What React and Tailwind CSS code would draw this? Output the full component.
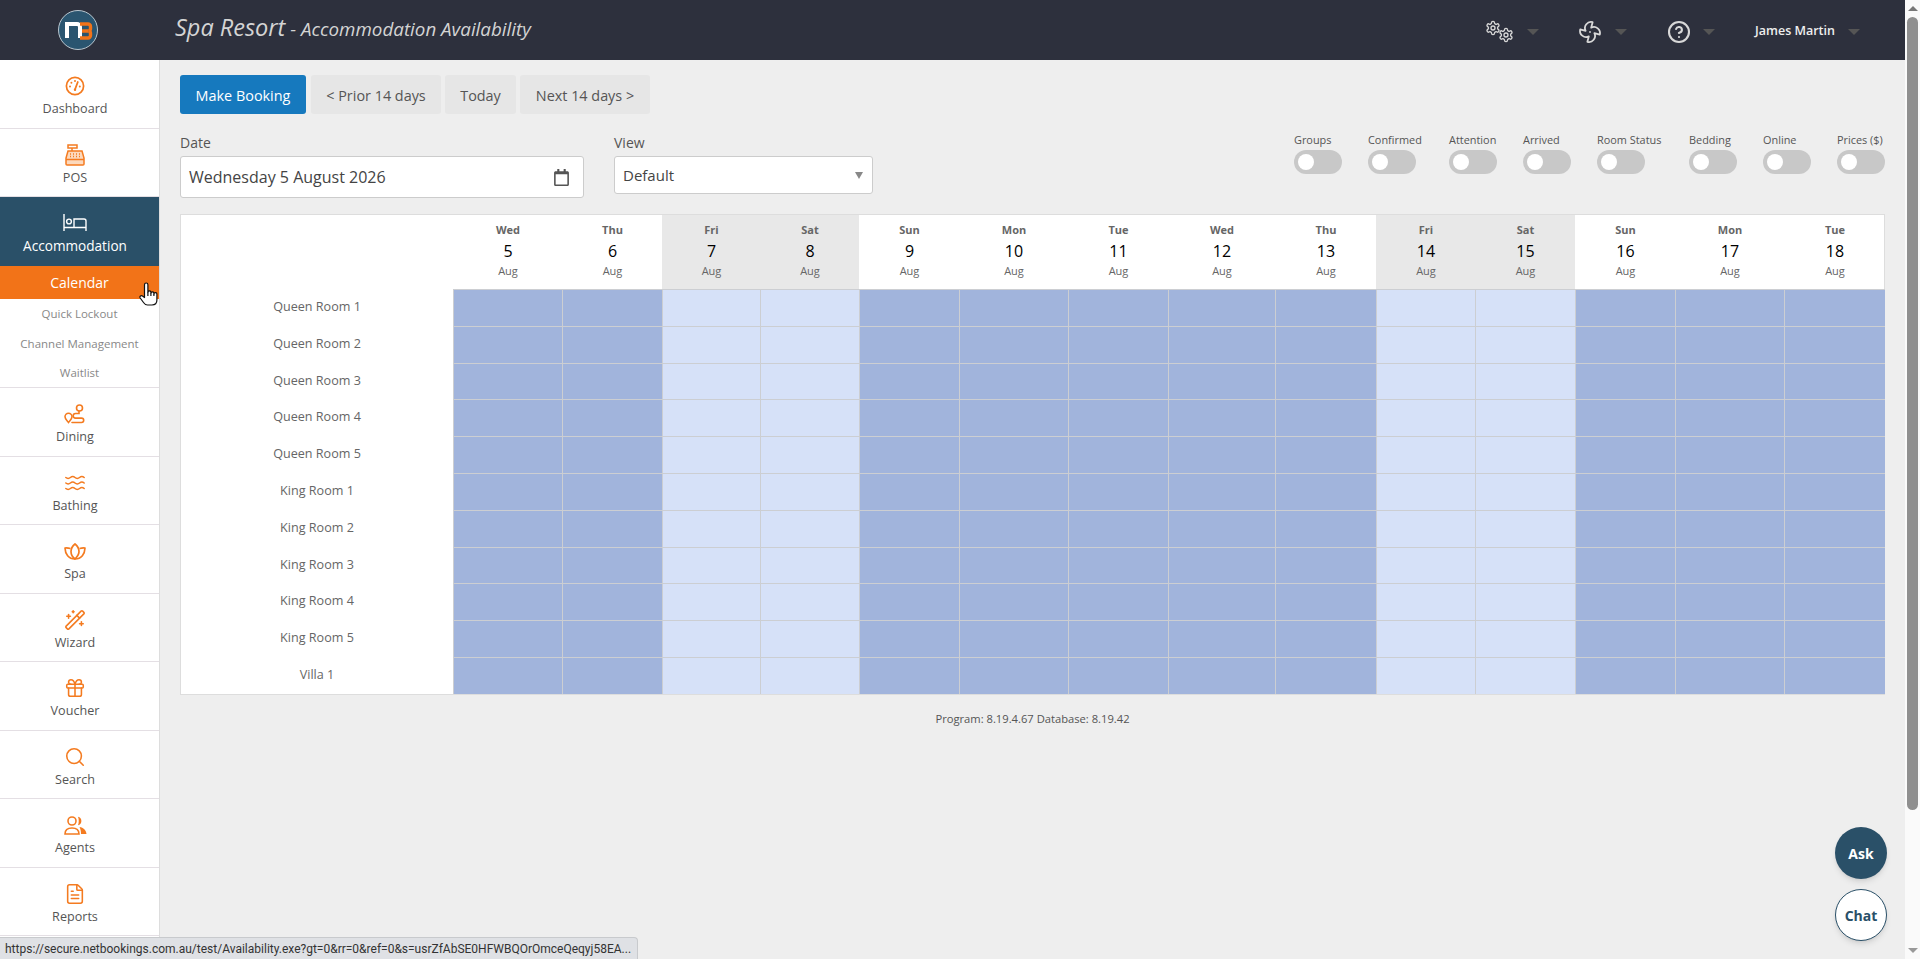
import React from 'react';
import { Gift, Search, FileText, WandSparkles, Waves, Fan, CircleHelp } from 'lucide-react';
import { FaRegCalendar } from 'react-icons/fa';

const GEAR =
  'M12.22 2h-.44a2 2 0 0 0-2 2v.18a2 2 0 0 1-1 1.73l-.43.25a2 2 0 0 1-2 0l-.15-.08a2 2 0 0 0-2.73.73l-.22.38a2 2 0 0 0 .73 2.73l.15.1a2 2 0 0 1 1 1.72v.51a2 2 0 0 1-1 1.74l-.15.09a2 2 0 0 0-.73 2.73l.22.38a2 2 0 0 0 2.73.73l.15-.08a2 2 0 0 1 2 0l.43.25a2 2 0 0 1 1 1.73V20a2 2 0 0 0 2 2h.44a2 2 0 0 0 2-2v-.18a2 2 0 0 1 1-1.73l.43-.25a2 2 0 0 1 2 0l.15.08a2 2 0 0 0 2.73-.73l.22-.39a2 2 0 0 0-.73-2.73l-.15-.08a2 2 0 0 1-1-1.74v-.5a2 2 0 0 1 1-1.74l.15-.09a2 2 0 0 0 .73-2.73l-.22-.38a2 2 0 0 0-2.73-.73l-.15.08a2 2 0 0 1-2 0l-.43-.25a2 2 0 0 1-1-1.73V4a2 2 0 0 0-2-2z';

const Cogs = () => (
  <svg width="29" height="23" viewBox="0 0 29 23" fill="none" stroke="#d8d8d8" strokeWidth="2">
    <svg x="0" y="0" width="16" height="16" viewBox="0 0 24 24">
      <path d={GEAR} />
      <circle cx="12" cy="12" r="3" />
    </svg>
    <svg x="13" y="7" width="16" height="16" viewBox="0 0 24 24">
      <path d={GEAR} />
      <circle cx="12" cy="12" r="3" />
    </svg>
  </svg>
);

const Logo = () => (
  <svg width="40" height="40" viewBox="0 0 40 40">
    <circle cx="20" cy="20" r="19.5" fill="#2a5570" stroke="#b9c6cf" />
    <path d="M9 28V14h10a3 3 0 0 1 3 3v11" fill="none" stroke="#fff" strokeWidth="4" />
    <path d="M22 14h8a2.5 2.5 0 0 1 2.5 2.5v2a2.5 2.5 0 0 1-2 2.5 2.5 2.5 0 0 1 2 2.5v2a2.5 2.5 0 0 1-2.5 2.5h-8M24 21h6" fill="none" stroke="#f27318" strokeWidth="3.4" />
  </svg>
);

const GaugeIcon = () => (
  <svg width="20" height="20" viewBox="0 0 20 20" fill="none" stroke="#f47b20" strokeWidth="1.7" strokeLinecap="round">
    <circle cx="10" cy="10" r="8.6" />
    <path d="M10 13.5 12.8 6" strokeWidth="1.8" />
    <circle cx="10" cy="13.8" r="1.2" fill="#f47b20" stroke="none" />
    <path d="M5 10.5v.01M6.4 6.8v.01M10 5v.01M14.8 10.5v.01" strokeWidth="2" />
  </svg>
);

const RegisterIcon = () => (
  <svg width="20" height="22" viewBox="0 0 20 22" fill="none" stroke="#f47b20" strokeWidth="1.5">
    <rect x="3" y="1" width="9" height="3" />
    <path d="M7 4v3" />
    <path d="M3 7h14l2 7v6a1 1 0 0 1-1 1H2a1 1 0 0 1-1-1v-6z" fill="#fcd9bd" />
    <path d="M1 15.5h18" />
    <path d="M5 10h1M8 10h1M11 10h1M14 10h1M5 12.5h1M8 12.5h1M11 12.5h1M14 12.5h1" strokeWidth="1.3" />
  </svg>
);

const BedIcon = () => (
  <svg width="24" height="18" viewBox="0 0 24 18" fill="none" stroke="#fff" strokeWidth="1.4">
    <path d="M1 0v17M1 13.5h22M23 17V7a2 2 0 0 0-2-2H11v8" />
    <circle cx="6" cy="7.5" r="2.4" />
  </svg>
);

const RouteIcon = () => (
  <svg width="22" height="20" viewBox="0 0 22 20" fill="none" stroke="#f47b20" strokeWidth="1.6" strokeLinecap="round">
    <path d="M4.5 18.5C3 16.5 1 15 1 12.8a3.5 3.5 0 0 1 7 0c0 2.2-2 3.700-3.500 5.700z" />
    <circle cx="15.500" cy="4" r="3" />
    <path d="M15 7v2.500h-3.500a2.300 2.300 0 0 0 0 4.600h6a2 2 0 0 1 0 4.400H8" />
  </svg>
);

const LotusIcon = () => (
  <svg width="22" height="17" viewBox="0 0 22 17" fill="none" stroke="#f47b20" strokeWidth="1.7" strokeLinejoin="round">
    <path d="M11 1c2.500 2 4 4.500 4 7.500S13 14 11 16c-2-1.500-4-4.500-4-7.500S8.500 3 11 1z" />
    <path d="M6.500 5.500C4.500 5 2.800 4.800 1 5c.2 6 3.500 11 10 11 6.500 0 9.800-5 10-11-1.800-.2-3.500 0-5.500.5" />
  </svg>
);

const AgentsIcon = () => (
  <svg width="23" height="19" viewBox="0 0 23 19" fill="none" stroke="#f47b20" strokeWidth="1.6">
    <circle cx="8" cy="5" r="4" />
    <path d="M1 18c0-4 2.500-6 7-6s7 2 7 6z" />
    <path d="M14 .8a4.300 4.300 0 0 1 0 8.400c1-2.500 1-5.900 0-8.400zM15.500 11c4 .5 6.500 3 7 7h-5.500c0-3-.5-5-1.500-7z" fill="#f47b20" stroke="none" />
  </svg>
);

const HandCursor = () => (
  <svg width="19" height="24" viewBox="0 0 19 24" fill="#fff" stroke="#111" strokeWidth="1.2" strokeLinejoin="round">
    <path d="M5.500 14V2.700a1.700 1.700 0 0 1 3.400 0V10a1.600 1.600 0 0 1 3 0v1a1.600 1.600 0 0 1 3 0v1a1.500 1.500 0 0 1 3 .3V18c0 3-2 5-5 5H8.500c-2 0-3-1-4-2.500L1.200 16c-1-1.500 1-3 2.300-2l2 1.500z" />
    <path d="M8.900 10v4M11.900 11v3M14.900 12v2" fill="none" />
  </svg>
);

const orange = { size: 22, color: '#f47b20', strokeWidth: 1.7 };

const topItems = [
  { name: 'Dashboard', icon: <GaugeIcon /> },
  { name: 'POS', icon: <RegisterIcon /> },
];

const bottomItems = [
  { name: 'Dining', icon: <RouteIcon /> },
  { name: 'Bathing', icon: <Waves {...orange} /> },
  { name: 'Spa', icon: <LotusIcon /> },
  { name: 'Wizard', icon: <WandSparkles {...orange} /> },
  { name: 'Voucher', icon: <Gift {...orange} /> },
  { name: 'Search', icon: <Search {...orange} /> },
  { name: 'Agents', icon: <AgentsIcon /> },
  { name: 'Reports', icon: <FileText {...orange} /> },
];

const subItems = [
  { name: 'Quick Lockout', className: 'h-[30px]' },
  { name: 'Channel Management', className: 'h-[29px]' },
  { name: 'Waitlist', className: 'h-[29px]' },
];

const days = [
  ['Wed', 5], ['Thu', 6], ['Fri', 7], ['Sat', 8], ['Sun', 9], ['Mon', 10], ['Tue', 11],
  ['Wed', 12], ['Thu', 13], ['Fri', 14], ['Sat', 15], ['Sun', 16], ['Mon', 17], ['Tue', 18],
];

const rooms = [
  'Queen Room 1', 'Queen Room 2', 'Queen Room 3', 'Queen Room 4', 'Queen Room 5',
  'King Room 1', 'King Room 2', 'King Room 3', 'King Room 4', 'King Room 5', 'Villa 1',
];

const toggles = [
  { name: 'Groups', className: 'w-[48px]' },
  { name: 'Confirmed', className: 'w-[55px]' },
  { name: 'Attention', className: 'w-[48px]' },
  { name: 'Arrived', className: 'w-[48px]' },
  { name: 'Room Status', className: 'w-[66px]' },
  { name: 'Bedding', className: 'w-[48px]' },
  { name: 'Online', className: 'w-[48px]' },
  { name: 'Prices ($)', className: 'w-[48px]' },
];

const Caret = () => (
  <span className="h-0 w-0 border-x-[6px] border-t-[6px] border-x-transparent border-t-[#555]" />
);

const NavItem = ({ item }) => (
  <div className="flex h-[68.5px] flex-col items-center border-b border-[#e4dfe4] pt-[15px] pr-[9px]">
    <span className="flex h-[22px] items-center justify-center">{item.icon}</span>
    <span className="mt-[3px] text-[12.6px] leading-[18px] text-[#555]">{item.name}</span>
  </div>
);

const App = () => {
  return (
    <div className="relative flex h-[959px] w-full overflow-hidden bg-[#eeeeee] font-['Open_Sans',sans-serif]">
      <div className="flex min-w-0 flex-1 flex-col">
        {/* Top bar */}
        <header className="flex h-[60px] shrink-0 items-center bg-[#2d303d] pr-[45px]">
          <div className="ml-[58px] flex w-[117px] shrink-0">
            <Logo />
          </div>
          <h1 className="mb-[5px] text-[18.8px] italic text-[#d4d4d4]">
            <span className="text-[23.5px]">Spa Resort</span> - Accommodation Availability
          </h1>
          <div className="ml-auto flex items-center pt-[3px]">
            <Cogs />
            <span className="ml-[13px] flex"><Caret /></span>
            <span className="ml-[39px] flex"><Fan size={24} color="#d8d8d8" strokeWidth={1.8} /></span>
            <span className="ml-[13px] flex"><Caret /></span>
            <span className="ml-[40px] flex"><CircleHelp size={24} color="#d8d8d8" strokeWidth={2.1} /></span>
            <span className="ml-[12px] flex"><Caret /></span>
            <span className="ml-[40px] text-[12.5px] font-semibold text-[#eeeeee]">James Martin</span>
            <span className="ml-[13px] flex"><Caret /></span>
          </div>
        </header>

        <div className="flex min-h-0 flex-1">
          {/* Side menu */}
          <aside className="w-[160px] shrink-0 overflow-hidden border-r border-[#dddddd] bg-white">
            {topItems.map((item) => (
              <NavItem key={item.name} item={item} />
            ))}
            <div className="flex h-[69px] flex-col items-center bg-[#2a5068] pt-[15px] pr-[9px]">
              <span className="flex h-[22px] items-center"><BedIcon /></span>
              <span className="mt-[3px] text-[13.6px] leading-[18px] text-white">Accommodation</span>
            </div>
            <div className="flex h-[33px] items-center justify-center bg-[#f27318] text-[14px] text-white">Calendar</div>
            <div className="border-b border-[#e4dfe4]">
              {subItems.map((item) => (
                <div key={item.name} className={`flex items-center justify-center text-[11.5px] text-[#888] ${item.className}`}>
                  {item.name}
                </div>
              ))}
            </div>
            {bottomItems.map((item) => (
              <NavItem key={item.name} item={item} />
            ))}
          </aside>

          {/* Main content */}
          <main className="min-w-0 flex-1 px-5 pt-[15px]">
            <div className="flex gap-[4px]">
              <button className="mr-px h-[39px] w-[126px] rounded-[3px] bg-[#1679be] pt-[2px] text-[14.4px] font-medium text-white">Make Booking</button>
              <button className="h-[39px] w-[130px] rounded-[3px] bg-[#e6e6e6] pt-[2px] text-[14.4px] text-[#555]">&lt; Prior 14 days</button>
              <button className="h-[39px] w-[71px] rounded-[3px] bg-[#e6e6e6] pt-[2px] text-[14.4px] text-[#555]">Today</button>
              <button className="h-[39px] w-[130px] rounded-[3px] bg-[#e6e6e6] pt-[2px] text-[14.4px] text-[#555]">Next 14 days &gt;</button>
            </div>

            <div className="mt-[19px] flex items-start">
              <div className="w-[404px]">
                <label className="block text-[14px] leading-[20px] text-[#555]">Date</label>
                <div className="mt-[3px] flex h-[42px] items-center justify-between rounded-[3px] border border-[#ccc] bg-white pr-[13px] pl-[8px] text-[16px] text-[#444]">
                  <span>Wednesday 5 August 2026</span>
                  <FaRegCalendar size={17} color="#555" />
                </div>
              </div>
              <div className="ml-[30px] w-[259px]">
                <label className="block text-[14px] leading-[20px] text-[#555]">View</label>
                <div className="mt-[3px] flex h-[38px] items-center justify-between rounded-[3px] border border-[#ccc] bg-white pr-[9px] pl-[8px] text-[15px] text-[#444]">
                  <span>Default</span>
                  <span className="h-0 w-0 border-x-[4px] border-t-[7px] border-x-transparent border-t-[#888]" />
                </div>
              </div>
              <div className="ml-auto -mt-[1px] flex gap-[26px]">
                {toggles.map((toggle) => (
                  <div key={toggle.name} className={`flex flex-col ${toggle.className}`}>
                    <span className="text-[10.9px] leading-[16px] whitespace-nowrap text-[#555]">{toggle.name}</span>
                    <span className="mt-[2px] flex h-[24px] w-[48px] items-center rounded-full bg-[#c8c8c8] pl-[4px]">
                      <span className="h-[16px] w-[16px] rounded-full bg-white" />
                    </span>
                  </div>
                ))}
              </div>
            </div>

            {/* Availability grid */}
            <div className="mt-[16px] grid grid-cols-[272px_109px_100px_98px_99px_100px_109px_100px_107px_101px_99px_100px_100px_109px_101px] grid-rows-[74px_repeat(11,36.8px)] border border-[#dddddd] bg-white">
              <div />
              {days.map(([name, num], i) => (
                <div
                  key={num}
                  className={`flex flex-col items-center pt-[7px] pl-px ${[2, 3, 9, 10].includes(i) ? 'bg-[#e8e8e8]' : ''}`}
                >
                  <span className="text-[11px] leading-[15px] font-bold text-[#666]">{name}</span>
                  <span className="mt-[3px] text-[16px] leading-[22px] text-black">{num}</span>
                  <span className="mt-[1px] text-[11px] leading-[15px] text-[#666]">Aug</span>
                </div>
              ))}
              {rooms.map((room) => (
                <React.Fragment key={room}>
                  <div className="flex items-center justify-center text-[12.6px] text-[#666]">{room}</div>
                  {days.map(([, num], i) => (
                    <div
                      key={num}
                      className={`border-t border-l border-[#ccced2] ${[2, 3, 9, 10].includes(i) ? 'bg-[#d6e1f8]' : 'bg-[#a1b4dc]'}`}
                    />
                  ))}
                </React.Fragment>
              ))}
            </div>

            <p className="mt-[15px] text-center text-[11.2px] leading-[18px] text-[#555]">Program: 8.19.4.67 Database: 8.19.42</p>
          </main>
        </div>
      </div>

      {/* Browser scrollbar */}
      <div className="flex w-[15px] shrink-0 flex-col items-center bg-[#fafafa]">
        <span className="mt-[6px] h-0 w-0 border-x-[5px] border-b-[5px] border-x-transparent border-b-[#777]" />
        <span className="mt-[6px] h-[793px] w-[11px] rounded-full bg-[#8f8f8f]" />
        <span className="mt-auto mb-[6px] h-0 w-0 border-x-[5px] border-t-[5px] border-x-transparent border-t-[#999]" />
      </div>

      {/* Floating buttons */}
      <button className="absolute top-[827px] left-[1835px] h-[52px] w-[52px] rounded-full bg-[#2a5068] text-[14px] font-bold text-white shadow-md">Ask</button>
      <button className="absolute top-[889px] left-[1835px] h-[52px] w-[52px] rounded-full border border-[#2a5068] bg-white text-[14px] font-bold text-[#2a5068] shadow-md">Chat</button>

      {/* Link preview */}
      <div className="absolute bottom-0 left-0 flex h-[22px] w-[638px] items-center rounded-tr-[4px] border-t border-r border-[#c8cacd] bg-[#dfe1e5] pl-[5px] font-['Roboto',sans-serif] text-[12px] whitespace-nowrap text-[#333]">
        https://secure.netbookings.com.au/test/Availability.exe?gt=0&amp;rr=0&amp;ref=0&amp;s=usrZfAbSE0HFWBQOrOmceQeqyj58EA...
      </div>

      {/* Mouse pointer */}
      <span className="absolute top-[282px] left-[139px] flex">
        <HandCursor />
      </span>
    </div>
  );
};

export default App;
